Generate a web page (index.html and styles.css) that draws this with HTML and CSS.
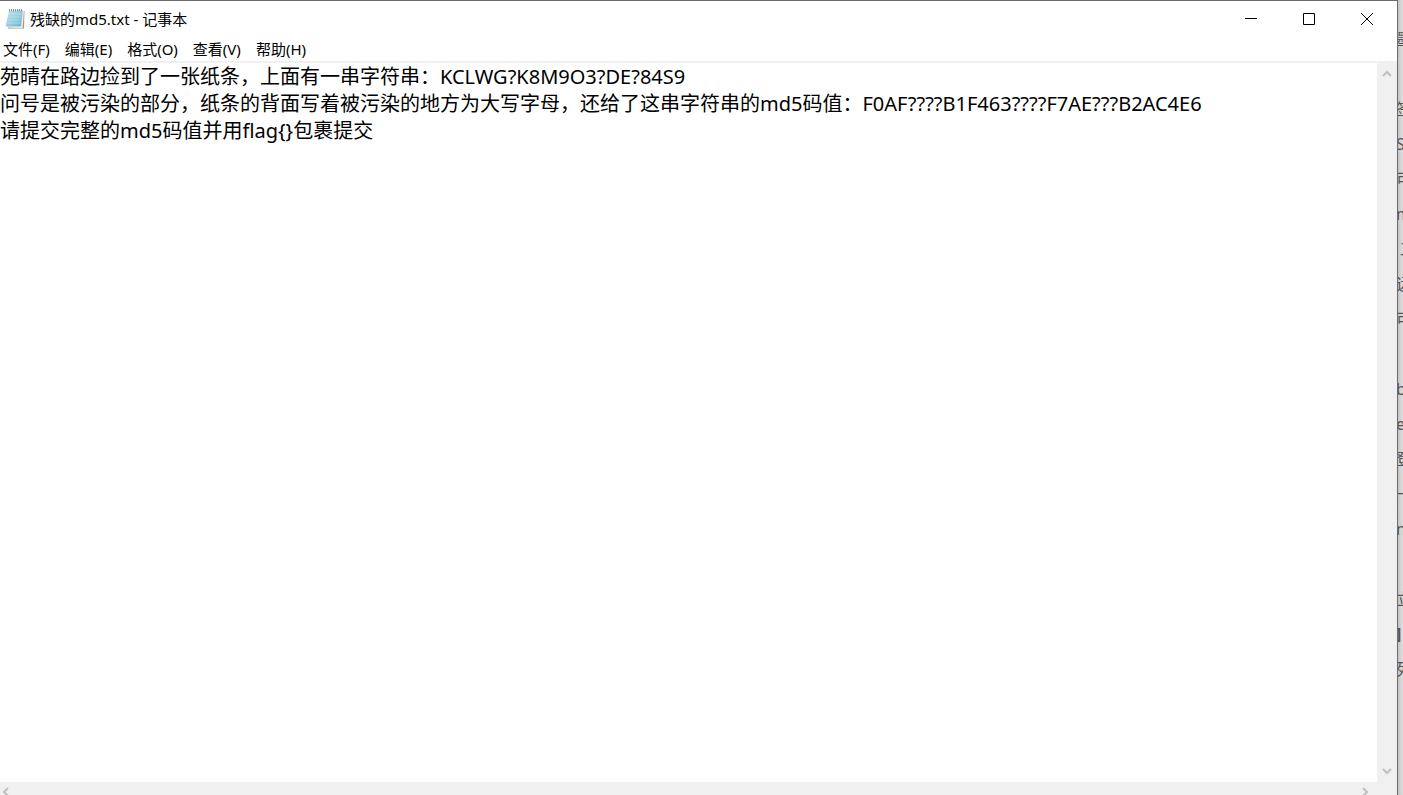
FILE: index.html
```html
<!DOCTYPE html>
<html lang="zh-CN">
<head>
  <meta charset="UTF-8">
  <title>残缺的md5.txt - 记事本</title>
  <link rel="stylesheet" href="styles.css">
</head>
<body>
  <div class="desktop">
    <!-- Notepad window -->
    <main class="window">
      <header class="titlebar">
        <svg class="app-icon" width="20" height="22" viewBox="0 0 20 22">
          <defs>
            <linearGradient id="page" x1="0" y1="0" x2="1" y2="1">
              <stop offset="0" stop-color="#c4eaf4"/>
              <stop offset="0.5" stop-color="#9bd0e0"/>
              <stop offset="1" stop-color="#5fb0c8"/>
            </linearGradient>
          </defs>
          <path d="M5 3H19.500L19 20.500H3Z" fill="#a99873"/>
          <path d="M4.500 2.500H19L17.500 20L2 19.500Z" fill="#f1f5f2"/>
          <path d="M4 2.500H18L16 18.500H0.500Z" fill="url(#page)"/>
          <path d="M4 6H16M3.500 9H16M3 12H15M2.500 15H15" stroke="#b9e2ed" stroke-width="0.700"/>
          <path d="M4.500 1V3.500M6.500 1V3.500M8.500 1V3.500M10.500 1V3.500M12.500 1V3.500M14.500 1V3.500M16.500 1V3.500" stroke="#7f979d" stroke-width="1"/>
        </svg>
        <h1>残缺的md5.txt - 记事本</h1>
        <div class="window-buttons">
          <button type="button" aria-label="最小化">
            <svg width="12" height="12" viewBox="0 0 12 12"><path d="M0 5.500H12"/></svg>
          </button>
          <button type="button" aria-label="最大化">
            <svg width="12" height="12" viewBox="0 0 12 12"><path d="M0.500 0.500H11.500V11.500H0.500Z"/></svg>
          </button>
          <button type="button" aria-label="关闭">
            <svg width="12" height="12" viewBox="0 0 12 12"><path d="M0 0L12 12M12 0L0 12"/></svg>
          </button>
        </div>
      </header>

      <nav class="menubar">
        <button type="button">文件(F)</button>
        <button type="button">编辑(E)</button>
        <button type="button">格式(O)</button>
        <button type="button">查看(V)</button>
        <button type="button">帮助(H)</button>
      </nav>

      <div class="editor">
        <textarea class="text" wrap="off" spellcheck="false" aria-label="文本编辑器">苑晴在路边捡到了一张纸条，上面有一串字符串：KCLWG?K8M9O3?DE?84S9
问号是被污染的部分，纸条的背面写着被污染的地方为大写字母，还给了这串字符串的md5码值：F0AF????B1F463????F7AE???B2AC4E6
请提交完整的md5码值并用flag{}包裹提交</textarea>
        <div class="scroll scroll-y">
          <button type="button" aria-label="向上滚动">
            <svg width="10" height="8" viewBox="0 0 10 8"><path d="M1 6L5 2L9 6"/></svg>
          </button>
          <button type="button" aria-label="向下滚动">
            <svg width="10" height="8" viewBox="0 0 10 8"><path d="M1 2L5 6L9 2"/></svg>
          </button>
        </div>
      </div>

      <div class="scroll scroll-x">
        <button type="button" aria-label="向左滚动">
          <svg width="8" height="10" viewBox="0 0 8 10"><path d="M6 1L2 5L6 9"/></svg>
        </button>
        <button type="button" aria-label="向右滚动">
          <svg width="8" height="10" viewBox="0 0 8 10"><path d="M2 1L6 5L2 9"/></svg>
        </button>
      </div>
    </main>

    <!-- Page behind the window -->
    <aside class="behind">
      <p>墨</p>
      <p></p>
      <p>签</p>
      <p>S</p>
      <p>可</p>
      <p>m</p>
      <p class="indent">工</p>
      <p>远</p>
      <p>可</p>
      <p></p>
      <p>b</p>
      <p>e</p>
      <p>登</p>
      <p>一</p>
      <p>n</p>
      <p></p>
      <p>立</p>
      <p class="bold">]</p>
      <p>列</p>
    </aside>
  </div>
</body>
</html>
```
FILE: styles.css
```css
* {
  box-sizing: border-box;
}
body {
  margin: 0;
  height: 100vh;
  overflow: hidden;
  background: #d6d6d6;
  color: #000;
  font-family: "Noto Sans", "Noto Sans CJK SC", sans-serif;
}
button {
  display: flex;
  align-items: center;
  justify-content: center;
  padding: 0;
  border: none;
  background: none;
  color: inherit;
  font: inherit;
}
.desktop {
  display: flex;
  /* the window runs a little past the bottom of the screen */
  height: calc(100vh + 7px);
}

/* Window */
.window {
  display: flex;
  flex-direction: column;
  flex: 1;
  min-width: 0;
  background: #fff;
  border-top: 1px solid #6b6b6b;
  border-right: 1px solid #6b6b6b;
}
.titlebar {
  display: flex;
  align-items: center;
  height: 36px;
  padding: 0 1px 0 5px;
}
.titlebar h1 {
  flex: 1;
  margin: 0 0 0 5px;
  font-size: 15px;
  font-weight: normal;
  line-height: 20px;
}
.window-buttons {
  display: flex;
}
.window-buttons button {
  width: 58px;
  height: 36px;
}
.window-buttons path {
  fill: none;
  stroke: #000;
  stroke-width: 1;
}
.menubar {
  display: flex;
  gap: 15px;
  height: 26px;
  padding-left: 3px;
  border-bottom: 2px solid #f0f0f0;
  font-size: 15px;
  line-height: 20px;
}

/* Text */
.editor {
  display: flex;
  flex: 1;
  min-height: 0;
}
.text {
  flex: 1;
  min-width: 0;
  margin: 0;
  padding: 0;
  border: none;
  outline: none;
  resize: none;
  overflow: hidden;
  background: #fff;
  color: #000;
  font-family: inherit;
  font-size: 20px;
  line-height: 27px;
}

/* Scrollbars */
.scroll {
  display: flex;
  justify-content: space-between;
  background: #f0f0f0;
}
.scroll path {
  fill: none;
  stroke: #bfbfbf;
  stroke-width: 2;
}
.scroll-y {
  flex-direction: column;
  width: 20px;
}
.scroll-y button {
  height: 22px;
}
.scroll-x {
  height: 20px;
  padding-right: 26px;
}
.scroll-x button {
  width: 12px;
}

/* Page behind */
.behind {
  width: 5px;
  padding-top: 22px;
  overflow: hidden;
  background: linear-gradient(to right, #c6c6c6, #dedede);
  color: #555;
  font-size: 16px;
  line-height: 35px;
}
.behind p {
  height: 35px;
  margin: 0 0 0 -2px;
}
.behind .indent {
  margin-left: 2px;
}
.behind .bold {
  font-weight: bold;
}
```
